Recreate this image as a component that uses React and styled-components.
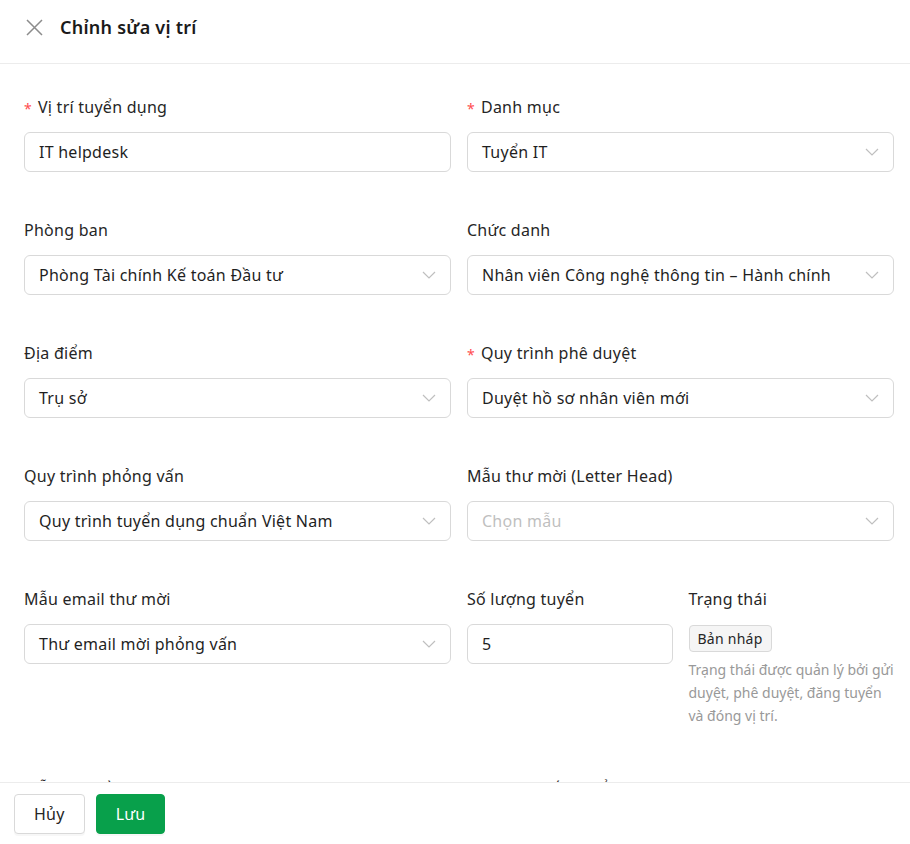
import styled, { createGlobalStyle } from "styled-components";

const GlobalStyle = createGlobalStyle`
  * { box-sizing: border-box; }
  html, body { margin: 0; padding: 0; background: #fff; }
  body {
    font-family: "Noto Sans", "Open Sans", sans-serif;
    color: #1f1f1f;
    letter-spacing: 0.25px;
  }
`;

const Page = styled.div`
  height: 100vh;
  display: flex;
  flex-direction: column;
  background: #fff;
`;

const Header = styled.header`
  height: 64px;
  flex-shrink: 0;
  display: flex;
  align-items: center;
  gap: 16px;
  padding: 0 24px 9px;
  border-bottom: 1px solid #ececec;
`;

const CloseButton = styled.button`
  width: 20px;
  height: 20px;
  padding: 0;
  border: 0;
  background: none;
  display: flex;
  align-items: center;
  justify-content: center;
  cursor: pointer;
`;

const Title = styled.h1`
  margin: 0;
  font-size: 18px;
  font-weight: 600;
  color: #1a1a1a;
`;

const Body = styled.main`
  flex: 1;
  overflow: hidden;
  padding: 32px 16px 0 24px;
`;

const Grid = styled.div`
  display: grid;
  grid-template-columns: 1fr 1fr;
  column-gap: 16px;
  row-gap: 47px;
`;

const Split = styled.div`
  display: grid;
  grid-template-columns: 1fr 1fr;
  column-gap: 16px;
`;

const Field = styled.div`
  display: flex;
  flex-direction: column;
`;

const Label = styled.label`
  display: flex;
  align-items: center;
  gap: 6px;
  height: 22px;
  margin-bottom: 14px;
  font-size: 16px;
  color: #262626;

  &::before {
    content: ${({ $required }) => ($required ? '"*"' : "none")};
    color: #ff4d4f;
    font-size: 14px;
    margin-top: 2px;
  }
`;

const Box = styled.div`
  height: 40px;
  display: flex;
  align-items: center;
  justify-content: space-between;
  padding: 0 14px;
  border: 1px solid #d9d9d9;
  border-radius: 6px;
  background: #fff;
  font-size: 16px;
  color: ${({ $placeholder }) => ($placeholder ? "#bfbfbf" : "#1f1f1f")};
  white-space: nowrap;
`;

const Badge = styled.span`
  align-self: flex-start;
  margin-top: 1px;
  padding: 2px 8px;
  border: 1px solid #d9d9d9;
  border-radius: 4px;
  background: #f5f5f5;
  font-size: 14px;
  line-height: 21px;
  color: #262626;
`;

const Help = styled.p`
  margin: 6px 0 3px;
  font-size: 14px;
  line-height: 23px;
  letter-spacing: 0;
  color: #999;
`;

const Footer = styled.footer`
  height: 62px;
  flex-shrink: 0;
  display: flex;
  align-items: center;
  gap: 11px;
  padding: 0 14px;
  border-top: 1px solid #ececec;
`;

const Button = styled.button`
  height: 40px;
  padding: 0 19px;
  border-radius: 4px;
  font-family: inherit;
  letter-spacing: inherit;
  font-size: 16px;
  cursor: pointer;
  border: 1px solid ${({ $primary }) => ($primary ? "#08a04b" : "#d9d9d9")};
  background: ${({ $primary }) => ($primary ? "#08a04b" : "#fff")};
  color: ${({ $primary }) => ($primary ? "#fff" : "#262626")};
  box-shadow: 0 2px 0 rgba(0, 0, 0, 0.03);
`;

const Chevron = () => (
  <svg width="14" height="8" viewBox="0 0 14 8" fill="none">
    <path d="M1 1l6 6 6-6" stroke="#bfbfbf" strokeWidth="1.2" />
  </svg>
);

const CloseIcon = () => (
  <svg width="17" height="17" viewBox="0 0 17 17" fill="none">
    <path d="M1 1l15 15M16 1L1 16" stroke="#8c8c8c" strokeWidth="1.5" />
  </svg>
);

const Select = ({ label, value, placeholder, required }) => (
  <Field>
    <Label $required={required}>{label}</Label>
    <Box $placeholder={!value}>
      <span>{value || placeholder}</span>
      <Chevron />
    </Box>
  </Field>
);

const Input = ({ label, value, required }) => (
  <Field>
    <Label $required={required}>{label}</Label>
    <Box>{value}</Box>
  </Field>
);

const App = () => (
  <Page>
    <GlobalStyle />
    <Header>
      <CloseButton>
        <CloseIcon />
      </CloseButton>
      <Title>Chỉnh sửa vị trí</Title>
    </Header>

    <Body>
      <Grid>
        <Input label="Vị trí tuyển dụng" value="IT helpdesk" required />
        <Select label="Danh mục" value="Tuyển IT" required />

        <Select label="Phòng ban" value="Phòng Tài chính Kế toán Đầu tư" />
        <Select
          label="Chức danh"
          value="Nhân viên Công nghệ thông tin – Hành chính"
        />

        <Select label="Địa điểm" value="Trụ sở" />
        <Select label="Quy trình phê duyệt" value="Duyệt hồ sơ nhân viên mới" required />

        <Select label="Quy trình phỏng vấn" value="Quy trình tuyển dụng chuẩn Việt Nam" />
        <Select label="Mẫu thư mời (Letter Head)" placeholder="Chọn mẫu" />

        <Select label="Mẫu email thư mời" value="Thư email mời phỏng vấn" />
        <Split>
          <Input label="Số lượng tuyển" value="5" />
          <Field>
            <Label>Trạng thái</Label>
            <Badge>Bản nháp</Badge>
            <Help>
              Trạng thái được quản lý bởi gửi duyệt, phê duyệt, đăng tuyển và
              đóng vị trí.
            </Help>
          </Field>
        </Split>

        <Select label="Mẫu hợp đồng" placeholder="Chọn mẫu" />
        <Split>
          <Input label="Ngày dự kiến tuyển" value="" />
          <Input label="Người phụ trách" value="" />
        </Split>
      </Grid>
    </Body>

    <Footer>
      <Button>Hủy</Button>
      <Button $primary>Lưu</Button>
    </Footer>
  </Page>
);

export default App;
